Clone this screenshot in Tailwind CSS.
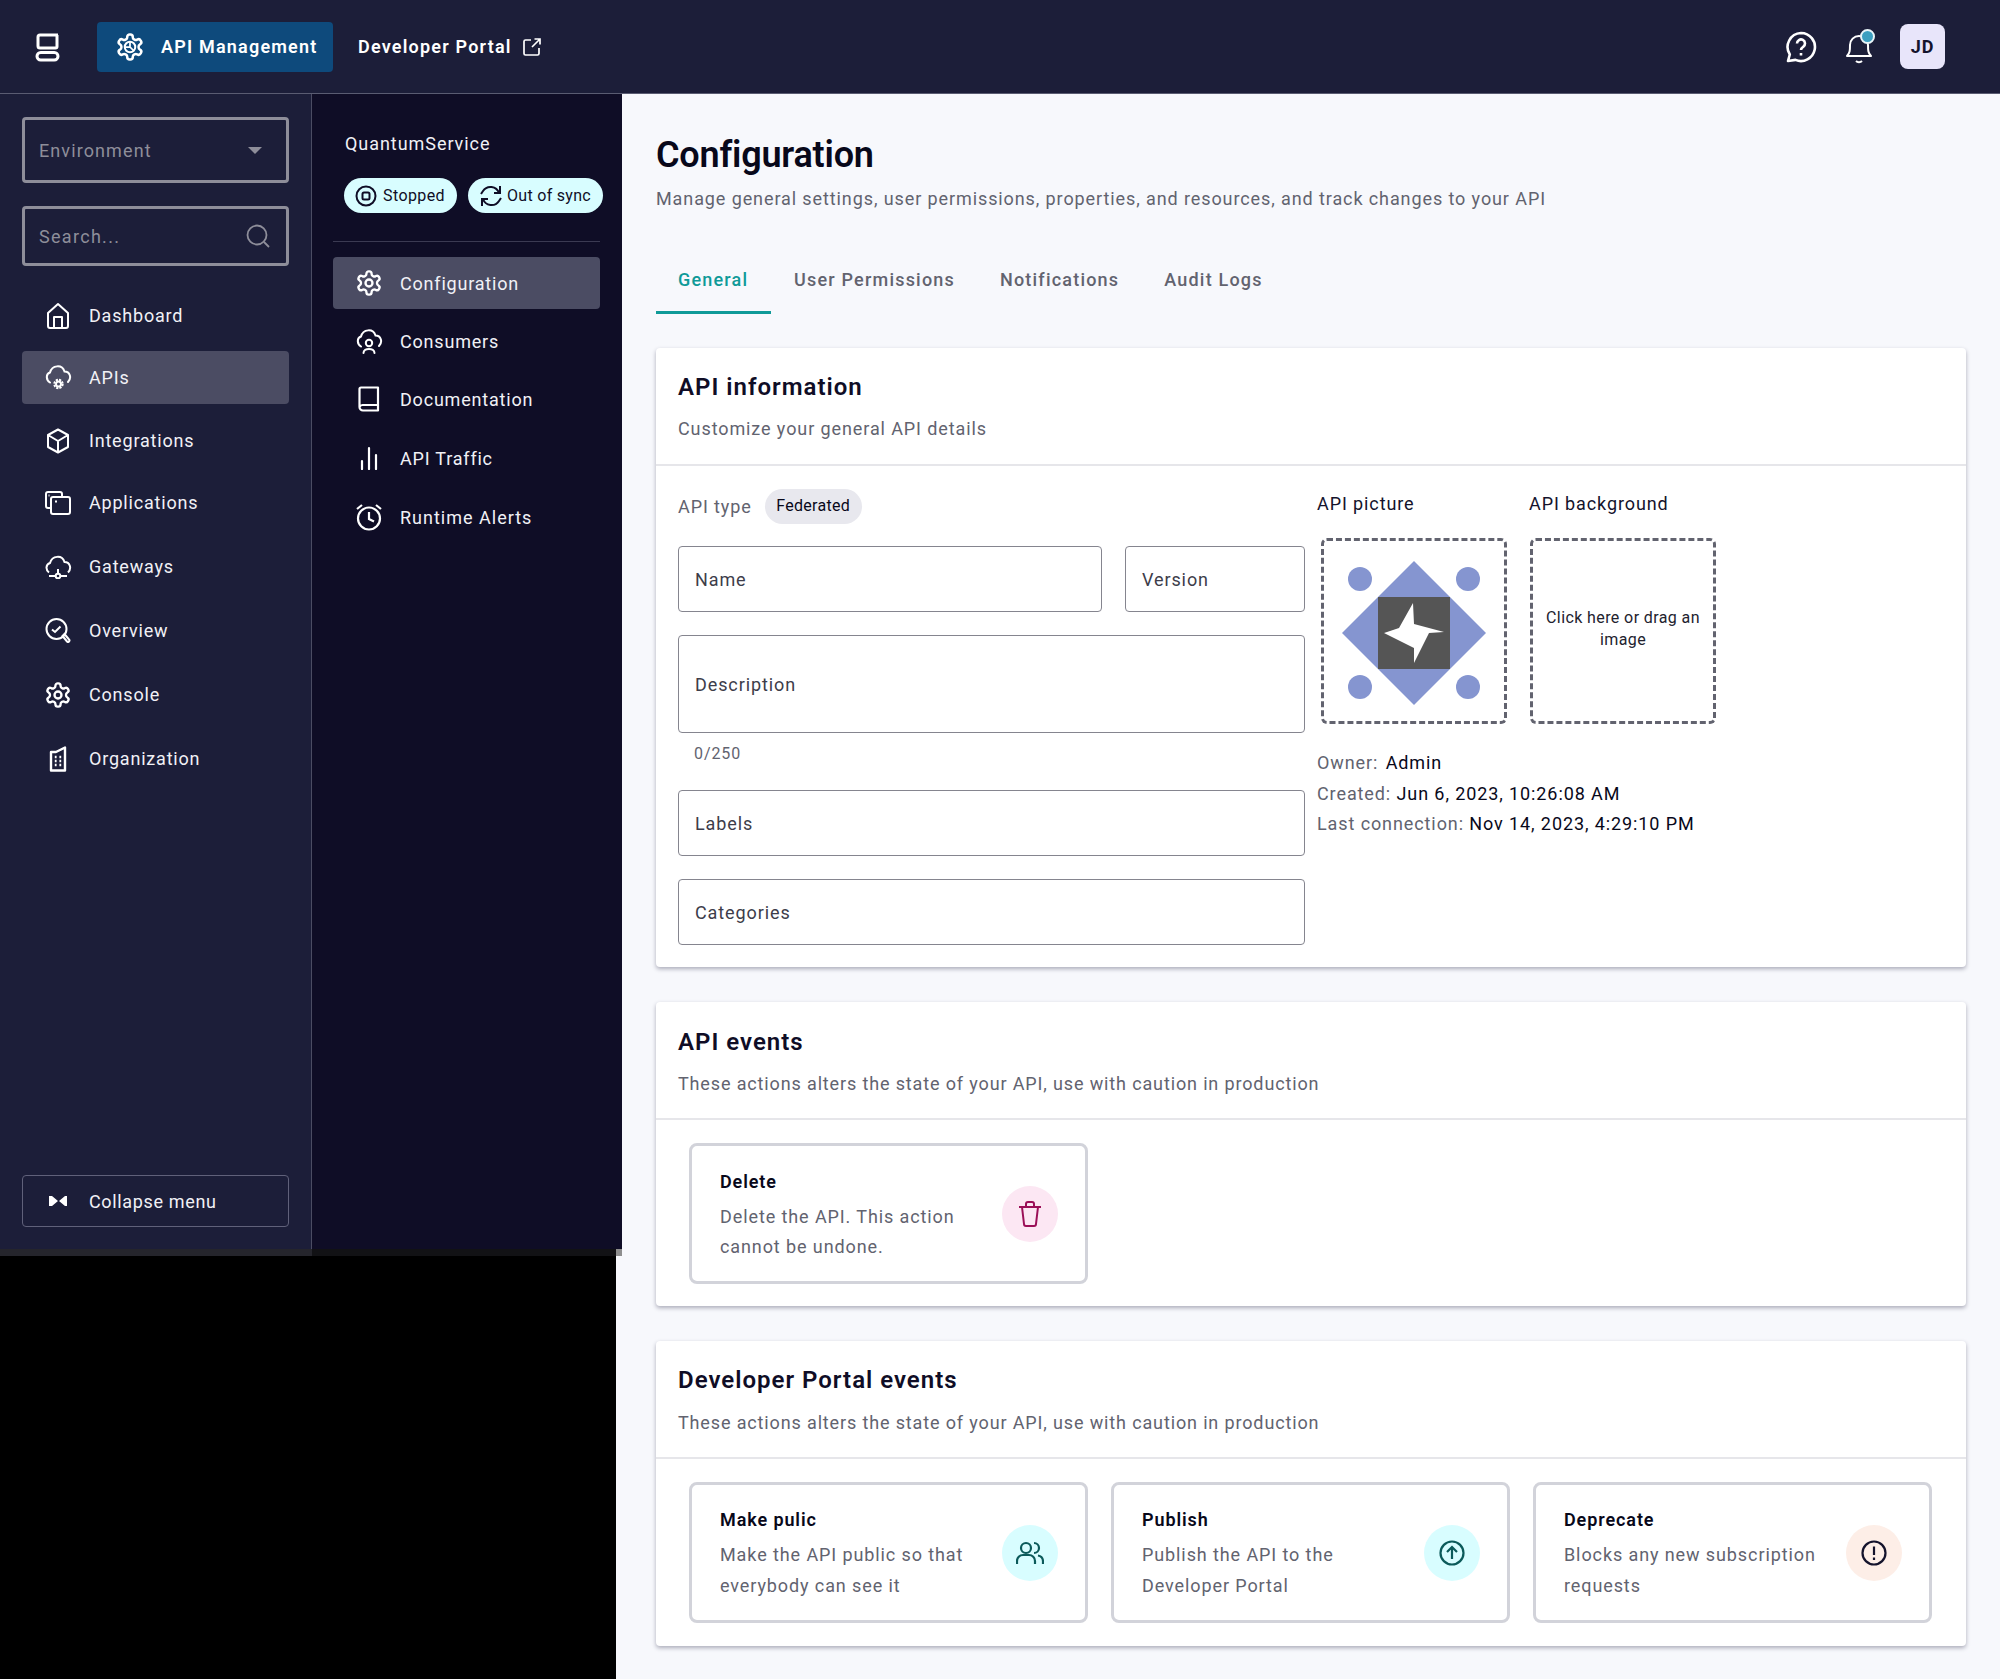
<!doctype html>
<html><head><meta charset="utf-8"><script src="https://cdn.jsdelivr.net/npm/@tailwindcss/browser@4"></script></head>
<body class="m-0 w-[2000px] h-[1679px] overflow-hidden bg-[#f7f8fc] font-['Roboto',sans-serif] text-[18px] tracking-[0.9px]">
<header class="h-[94px] bg-[#1c1e39] border-b border-[#5a5c72] flex items-center text-white">
  <svg class="ml-[35px] w-[25px] h-[30px] mt-[1px]" viewBox="0 0 25 30" fill="none" stroke="#fff" stroke-width="3" stroke-linejoin="round"><path d="M23 3H5a2 2 0 0 0-2 2v9a2 2 0 0 0 2 2h15.500a1.500 1.500 0 0 0 1.500-1.500V3"/><rect x="2" y="20.500" width="21" height="7.500" rx="3.700"/></svg>
  <div class="ml-[37px] w-[236px] h-[50px] rounded-[4px] bg-[#0e4a7c] flex items-center pl-[18px] font-semibold tracking-[1.2px]">
    <svg class="w-[30px] h-[32px]" viewBox="0 0 24 24" fill="none" stroke="#fff" stroke-width="2" stroke-linejoin="round"><path d="M12.220 2h-.44a2 2 0 0 0-2 2v.18a2 2 0 0 1-1 1.730l-.43.25a2 2 0 0 1-2 0l-.15-.08a2 2 0 0 0-2.730.73l-.22.38a2 2 0 0 0 .73 2.730l.15.1a2 2 0 0 1 1 1.720v.51a2 2 0 0 1-1 1.740l-.15.09a2 2 0 0 0-.73 2.730l.22.38a2 2 0 0 0 2.730.73l.15-.08a2 2 0 0 1 2 0l.43.25a2 2 0 0 1 1 1.730V20a2 2 0 0 0 2 2h.44a2 2 0 0 0 2-2v-.18a2 2 0 0 1 1-1.730l.43-.25a2 2 0 0 1 2 0l.15.08a2 2 0 0 0 2.730-.73l.22-.39a2 2 0 0 0-.73-2.730l-.15-.08a2 2 0 0 1-1-1.740v-.5a2 2 0 0 1 1-1.740l.15-.09a2 2 0 0 0 .73-2.730l-.22-.38a2 2 0 0 0-2.730-.73l-.15.08a2 2 0 0 1-2 0l-.43-.25a2 2 0 0 1-1-1.730V4a2 2 0 0 0-2-2z"/><circle cx="12" cy="12" r="4.200" stroke-width="1.600"/><path d="M12 8v4l2.800 2.800M12 12H8" stroke-width="1.400"/></svg>
    <span class="ml-[16px]">API Management</span>
  </div>
  <div class="ml-[25px] flex items-center font-semibold tracking-[1.2px]"><span>Developer Portal</span>
    <svg class="ml-[10px] w-[20px] h-[20px]" viewBox="0 0 20 20" fill="none" stroke="#fff" stroke-width="1.700"><path d="M9 3H3.500A1.500 1.500 0 0 0 2 4.500v12A1.500 1.500 0 0 0 3.500 18h12a1.500 1.500 0 0 0 1.500-1.500V11M10 10l8-8M12.500 2H18v5.500"/></svg>
  </div>
  <div class="ml-auto flex items-center">
    <svg class="w-[32px] h-[32px] -ml-[1px]" viewBox="0 0 32 32" fill="none" stroke="#fff" stroke-width="2.600"><path d="M16 2a14 14 0 1 1-5.500 26.900L3 30l1.800-6.500A14 14 0 0 1 16 2z" stroke-linejoin="round"/><path d="M12 12.500a4 4 0 1 1 6.200 3.300c-1.400 1-2.200 1.600-2.200 3.200M16 22v2.500"/></svg>
    <div class="relative ml-[26px] w-[32px] h-[36px]">
      <svg class="w-[32px] h-[36px]" viewBox="0 0 32 36" fill="none" stroke="#fff" stroke-width="2"><path d="M4 27c3-3 3-6 3-11a9 9 0 0 1 18 0c0 5 0 8 3 11z" stroke-linejoin="round"/><path d="M13 32c1.500 1.500 4.500 1.500 6 0"/></svg>
      <span class="absolute left-[17px] top-0 w-[15px] h-[15px] rounded-full bg-[#3c9fc0] border-2 border-[#e8f4f8]"></span>
    </div>
    <div class="ml-[25px] mr-[55px] w-[45px] h-[45px] rounded-[8px] bg-[#e8e5fa] text-[#14132c] flex items-center justify-center font-bold">JD</div>
  </div>
</header>
<div class="h-[1585px] flex">
  <div class="w-[622px] flex flex-col shrink-0">
    <div class="h-[1155px] flex text-[#f1f1f6] tracking-[0.8px]">
      <aside class="w-[312px] bg-[#1c1e39] border-r border-[#4b4c63] px-[22px] pt-[23px] pb-[22px] flex flex-col">
        <div class="w-[267px] h-[66px] rounded-[4px] border-[3px] border-[#8e8e9a] flex items-center px-[14px] text-[#8e8e9a] tracking-[1.1px]"><span>Environment</span><span class="ml-auto mr-[10px] w-0 h-0 border-x-[7px] border-x-transparent border-t-[7px] border-t-[#8e8e9a]"></span></div>
        <div class="mt-[23px] w-[267px] h-[60px] rounded-[4px] border-[3px] border-[#8e8e9a] flex items-center pl-[14px] pr-[16px] text-[#8e8e9a] tracking-[1.3px]"><span>Search...</span>
          <svg class="ml-auto w-[24px] h-[24px]" viewBox="0 0 24 24" fill="none" stroke="#8e8e9a" stroke-width="1.800"><circle cx="11" cy="11" r="9.500"/><path d="M18 18l5 5"/></svg></div>
        <nav class="mt-[23px] flex flex-col">
          <a class="h-[53px] flex items-center pl-[24px] gap-[19px]"><svg class="w-[24px] h-[28px] shrink-0" viewBox="0 0 24 28" fill="none" stroke="#fff" stroke-width="2" stroke-linejoin="round"><path d="M2 24V11L12 2l10 9v13a2 2 0 0 1-2 2H4a2 2 0 0 1-2-2z"/><path d="M8 26V15h8v11"/></svg>Dashboard</a>
          <a class="h-[53px] mt-[9px] rounded-[4px] bg-[#4b4c63] flex items-center pl-[22px] gap-[17px]"><svg class="w-[28px] h-[28px] shrink-0" viewBox="0 0 28 28" fill="none" stroke="#fff" stroke-width="2" stroke-linecap="round"><path d="M6 18.500C2 16 1.500 10 6 8.500 8 1 18 0 20.500 7.500 26 7.500 28 14 24 18"/><circle cx="14.500" cy="20" r="2.500" stroke-width="2"/><circle cx="14.500" cy="20" r="4.200" stroke-width="2" stroke-dasharray="2.200 1.100" stroke-linecap="butt"/></svg>APIs</a>
          <a class="h-[53px] mt-[10px] flex items-center pl-[24px] gap-[19px]"><svg class="w-[24px] h-[26px] shrink-0" viewBox="0 0 24 26" fill="none" stroke="#fff" stroke-width="2" stroke-linejoin="round"><path d="M12 1.500l10 5.500v12l-10 5.500L2 19V7zM2 7l10 6 10-6M12 13v11.500"/></svg>Integrations</a>
          <a class="h-[53px] mt-[9px] flex items-center pl-[23px] gap-[18px]"><svg class="w-[26px] h-[24px] shrink-0" viewBox="0 0 26 24" fill="none" stroke="#fff" stroke-width="2" stroke-linejoin="round"><path d="M6 17H3a2 2 0 0 1-2-2V3a2 2 0 0 1 2-2h12a2 2 0 0 1 2 2v3"/><rect x="6" y="6" width="19" height="17" rx="2"/><path d="M10 10.500h2M3.500 4.500h1" stroke-width="2.200"/></svg>Applications</a>
          <a class="h-[53px] mt-[11px] flex items-center pl-[22px] gap-[17px]"><svg class="w-[28px] h-[24px] shrink-0" viewBox="0 0 28 24" fill="none" stroke="#fff" stroke-width="2"><path d="M5 17.500C1.500 15 1.500 9.500 6 8 8 .5 18-.5 20.500 7 26 7 28 13.500 24 17.500M14 14v4M5 21h6.500M16.500 21H23"/><circle cx="14" cy="21" r="2.300"/></svg>Gateways</a>
          <a class="h-[53px] mt-[11px] flex items-center pl-[23px] gap-[18px]"><svg class="w-[26px] h-[25px] shrink-0" viewBox="0 0 26 25" fill="none" stroke="#fff" stroke-width="2"><circle cx="11.500" cy="11" r="10"/><path d="M7 11.500l3 2.500 5.500-5.500M17.500 18l2-2 4.500 5.500a1.400 1.400 0 0 1-2 2z"/></svg>Overview</a>
          <a class="h-[53px] mt-[11px] flex items-center pl-[22px] gap-[17px]"><svg class="w-[28px] h-[28px] shrink-0" viewBox="0 0 24 24" fill="none" stroke="#fff" stroke-width="2" stroke-linejoin="round"><path d="M12.220 2h-.44a2 2 0 0 0-2 2v.18a2 2 0 0 1-1 1.730l-.43.25a2 2 0 0 1-2 0l-.15-.08a2 2 0 0 0-2.730.73l-.22.38a2 2 0 0 0 .73 2.730l.15.1a2 2 0 0 1 1 1.720v.51a2 2 0 0 1-1 1.740l-.15.09a2 2 0 0 0-.73 2.730l.22.38a2 2 0 0 0 2.730.73l.15-.08a2 2 0 0 1 2 0l.43.25a2 2 0 0 1 1 1.730V20a2 2 0 0 0 2 2h.44a2 2 0 0 0 2-2v-.18a2 2 0 0 1 1-1.730l.43-.25a2 2 0 0 1 2 0l.15.08a2 2 0 0 0 2.730-.73l.22-.39a2 2 0 0 0-.73-2.730l-.15-.08a2 2 0 0 1-1-1.740v-.5a2 2 0 0 1 1-1.740l.15-.09a2 2 0 0 0 .73-2.730l-.22-.38a2 2 0 0 0-2.730-.73l-.15.08a2 2 0 0 1-2 0l-.43-.25a2 2 0 0 1-1-1.730V4a2 2 0 0 0-2-2z"/><circle cx="12" cy="12" r="3"/></svg>Console</a>
          <a class="h-[53px] mt-[11px] flex items-center pl-[24px] gap-[19px]"><svg class="w-[24px] h-[26px] shrink-0" viewBox="0 0 24 26" fill="none" stroke="#fff" stroke-width="2.400" stroke-linejoin="round"><path d="M5 6h5l9-4.500V24.500H5z"/><path d="M8.800 11h1.800M13.400 11h1.800M8.800 15h1.800M13.400 15h1.800M8.800 19h1.800M13.400 19h1.800" stroke-width="2.400"/></svg>Organization</a>
        </nav>
        <div class="mt-auto w-[267px] h-[52px] rounded-[4px] border border-[#60617a] flex items-center pl-[23px] gap-[19px] tracking-[0.65px]">
          <svg class="w-[24px] h-[14px] shrink-0" viewBox="0 0 24 14" fill="#fff"><path d="M3 2h3l6 5-6 5H3zM21 2v10h-2l-6-5 6-5z"/></svg>Collapse menu</div>
      </aside>
      <aside class="w-[310px] bg-[#0f0d26] pt-[32px] pl-[21px] pr-[22px]">
        <div class="ml-[12px] leading-[36px] h-[36px] tracking-[0.95px]">QuantumService</div>
        <div class="ml-[11px] mt-[16px] flex gap-[11px] text-[#0f0d26] text-[16px] tracking-[0.4px]">
          <span class="h-[35px] w-[113px] shrink-0 rounded-full bg-[#d8fdff] flex items-center pl-[11px] gap-[6px]"><svg class="w-[22px] h-[22px]" viewBox="0 0 22 22" fill="none" stroke="#0f0d26" stroke-width="2"><circle cx="11" cy="11" r="9.500"/><rect x="7.500" y="7.500" width="7" height="7" rx="1.500"/></svg>Stopped</span>
          <span class="h-[35px] w-[135px] shrink-0 rounded-full bg-[#d8fdff] flex items-center pl-[11px] gap-[4px] tracking-[0.3px]"><svg class="w-[24px] h-[24px]" viewBox="0 0 24 24" fill="none" stroke="#0f0d26" stroke-width="2"><path d="M20 9a9 9 0 0 0-16-2L2 10M4 15a9 9 0 0 0 16 2l2-3"/><path d="M21 2v7h-6M3 22v-7h6"/></svg>Out of sync</span>
        </div>
        <div class="mt-[28px] h-[1px] bg-[#3b3a52]"></div>
        <div class="mt-[15px] flex flex-col">
          <a class="h-[52px] rounded-[4px] bg-[#4b4c63] flex items-center pl-[22px] gap-[17px]"><svg class="w-[28px] h-[28px] shrink-0" viewBox="0 0 24 24" fill="none" stroke="#fff" stroke-width="2" stroke-linejoin="round"><path d="M12.220 2h-.44a2 2 0 0 0-2 2v.18a2 2 0 0 1-1 1.730l-.43.25a2 2 0 0 1-2 0l-.15-.08a2 2 0 0 0-2.730.73l-.22.38a2 2 0 0 0 .73 2.730l.15.1a2 2 0 0 1 1 1.720v.51a2 2 0 0 1-1 1.740l-.15.09a2 2 0 0 0-.73 2.730l.22.38a2 2 0 0 0 2.730.73l.15-.08a2 2 0 0 1 2 0l.43.25a2 2 0 0 1 1 1.730V20a2 2 0 0 0 2 2h.44a2 2 0 0 0 2-2v-.18a2 2 0 0 1 1-1.730l.43-.25a2 2 0 0 1 2 0l.15.08a2 2 0 0 0 2.730-.73l.22-.39a2 2 0 0 0-.73-2.730l-.15-.08a2 2 0 0 1-1-1.740v-.5a2 2 0 0 1 1-1.740l.15-.09a2 2 0 0 0 .73-2.730l-.22-.38a2 2 0 0 0-2.730-.73l-.15.08a2 2 0 0 1-2 0l-.43-.25a2 2 0 0 1-1-1.730V4a2 2 0 0 0-2-2z"/><circle cx="12" cy="12" r="3"/></svg>Configuration</a>
          <a class="h-[52px] mt-[6px] flex items-center pl-[22px] gap-[17px]"><svg class="w-[28px] h-[26px] shrink-0" viewBox="0 0 28 26" fill="none" stroke="#fff" stroke-width="2" stroke-linecap="round"><path d="M6 18.500C2 16 1.500 10 6 8.500 8 1 18 0 20.500 7.500 26 7.500 28 14 24 18"/><circle cx="14" cy="15" r="3.200"/><path d="M8.500 25c0-5.500 11-5.500 11 0"/></svg>Consumers</a>
          <a class="h-[52px] mt-[6px] flex items-center pl-[22px] gap-[17px]"><svg class="w-[28px] h-[26px] shrink-0" viewBox="0 0 28 26" fill="none" stroke="#fff" stroke-width="2.200" stroke-linejoin="round"><path d="M4.500 21V3a1.500 1.500 0 0 1 1.500-1.500h17V24.500H8A3.500 3.500 0 0 1 4.500 21zM4.500 21A3.500 3.500 0 0 1 8 19h15"/></svg>Documentation</a>
          <a class="h-[52px] mt-[7px] flex items-center pl-[22px] gap-[17px]"><svg class="w-[28px] h-[24px] shrink-0" viewBox="0 0 28 24" fill="none" stroke="#fff" stroke-width="2.200" stroke-linecap="round"><path d="M7 23v-8M14 23V2M21 23V9"/></svg>API Traffic</a>
          <a class="h-[52px] mt-[7px] flex items-center pl-[22px] gap-[17px] tracking-[1px]"><svg class="w-[28px] h-[28px] shrink-0" viewBox="0 0 28 28" fill="none" stroke="#fff" stroke-width="2.200"><circle cx="14" cy="15.500" r="11"/><path d="M14 9v7l5 2.500M2 6l5-4M26 6l-5-4"/></svg>Runtime Alerts</a>
        </div>
      </aside>
    </div>
    <div class="h-[7px] flex"><div class="w-[312px] bg-[#25252c]"></div><div class="w-[304px] bg-[#121215]"></div><div class="w-[6px] bg-[#8e8e8e]"></div></div>
    <div class="flex-1 w-[616px] bg-black"></div>
  </div>
  <main class="flex-1 pl-[34px] pr-[34px] text-[#62636f]">
    <h1 class="pt-[41px] h-[77px] text-[36px] leading-[40px] font-semibold text-[#08081a] tracking-[-0.2px]">Configuration</h1>
    <p class="mt-[14px] leading-[28px]">Manage general settings, user permissions, properties, and resources, and track changes to your API</p>
    <div class="mt-[30px] flex font-medium h-[71px] tracking-[1.2px]">
      <span class="relative w-[115px] pl-[22px] text-[#0f9a98] leading-[74px]">General<i class="absolute left-0 bottom-0 w-[115px] h-[3px] bg-[#0f9a98]"></i></span>
      <span class="ml-[23px] leading-[74px]">User Permissions</span>
      <span class="ml-[45px] leading-[74px]">Notifications</span>
      <span class="ml-[45px] leading-[74px]">Audit Logs</span>
    </div>
    <section class="mt-[34px] h-[619px] bg-white rounded-[4px] shadow-[0_2px_4px_rgba(30,30,60,0.35)]">
      <div class="h-[118px] border-b-2 border-[#e6e6ea] pl-[22px] pt-[21px]">
        <h2 class="text-[24px] leading-[36px] font-semibold text-[#0f0d26] tracking-[1px]">API information</h2>
        <p class="mt-[11px] leading-[26px]">Customize your general API details</p>
      </div>
      <div class="flex pl-[22px]">
        <div class="w-[627px]">
          <div class="h-[80px] flex items-center">API type<span class="ml-[13px] h-[35px] w-[97px] rounded-full bg-[#e8e8ee] text-[#08081a] text-[16px] flex items-center justify-center tracking-[0.3px]">Federated</span></div>
          <div class="flex gap-[23px]">
            <div class="w-[424px] h-[66px] rounded-[4px] border border-[#85858f] flex items-center pl-[16px] text-[#3d3d4a]">Name</div>
            <div class="w-[180px] h-[66px] rounded-[4px] border border-[#85858f] flex items-center pl-[16px] text-[#3d3d4a]">Version</div>
          </div>
          <div class="mt-[23px] h-[98px] rounded-[4px] border border-[#85858f] flex items-center pl-[16px] text-[#3d3d4a]">Description</div>
          <div class="pl-[16px] h-[57px] pt-[8px] text-[16px] leading-[26px]">0/250</div>
          <div class="h-[66px] rounded-[4px] border border-[#85858f] flex items-center pl-[16px] text-[#3d3d4a]">Labels</div>
          <div class="mt-[23px] h-[66px] rounded-[4px] border border-[#85858f] flex items-center pl-[16px] text-[#3d3d4a]">Categories</div>
        </div>
        <div class="ml-[12px]">
          <div class="flex text-[#14132c] pt-[24px] leading-[28px] h-[72px]"><span class="w-[212px]">API picture</span><span>API background</span></div>
          <div class="flex ml-[4px] gap-[23px]">
            <div class="w-[186px] h-[186px] rounded-[6px] border-[3px] border-dashed border-[#62636f] flex items-center justify-center pt-[4px]">
              <svg class="w-[144px] h-[144px]" viewBox="0 0 144 144"><circle cx="18" cy="18" r="12" fill="#8595d0"/><circle cx="126" cy="18" r="12" fill="#8595d0"/><circle cx="18" cy="126" r="12" fill="#8595d0"/><circle cx="126" cy="126" r="12" fill="#8595d0"/><path d="M72 0l72 72-72 72L0 72z" fill="#8595d0"/><rect x="36" y="36" width="72" height="72" fill="#555"/><path d="M71 42l1 21 30 8-15 1-15 30 0-15-30-15 15-5z" fill="#fff"/></svg>
            </div>
            <div class="w-[186px] h-[186px] rounded-[6px] border-[3px] border-dashed border-[#62636f] flex items-center justify-center text-center text-[16px] leading-[22px] tracking-[0.4px] text-[#22222e] px-[10px] pb-[4px]">Click here or drag an image</div>
          </div>
          <div class="mt-[24px] leading-[30.500px]">
            <div>Owner: <span class="text-[#08081a] ml-[2px]">Admin</span></div>
            <div>Created: <span class="text-[#08081a]">Jun 6, 2023, 10:26:08 AM</span></div>
            <div>Last connection: <span class="text-[#08081a]">Nov 14, 2023, 4:29:10 PM</span></div>
          </div>
        </div>
      </div>
    </section>
    <section class="mt-[35px] h-[304px] bg-white rounded-[4px] shadow-[0_2px_4px_rgba(30,30,60,0.35)]">
      <div class="h-[118px] border-b-2 border-[#e6e6ea] pl-[22px] pt-[22px]">
        <h2 class="text-[24px] leading-[36px] font-semibold text-[#0f0d26] tracking-[1px]">API events</h2>
        <p class="mt-[11px] leading-[26px] tracking-[0.86px]">These actions alters the state of your API, use with caution in production</p>
      </div>
      <div class="pl-[33px] pt-[23px]">
        <div class="w-[399px] h-[141px] rounded-[8px] border-[3px] border-[#d2d3da] flex items-center pl-[28px] pr-[27px]">
          <div class="w-[260px]"><div class="font-semibold text-[#08081a] leading-[34px]">Delete</div><div class="leading-[30.500px] mt-[3px]">Delete the API. This action cannot be undone.</div></div>
          <span class="ml-auto w-[56px] h-[56px] rounded-full bg-[#fce7f3] flex items-center justify-center"><svg class="w-[24px] h-[26px]" viewBox="0 0 24 26" fill="none" stroke="#9b0f57" stroke-width="2"><path d="M1 6h22M4 6l2 17a2 2 0 0 0 2 2h8a2 2 0 0 0 2-2l2-17M8 6V3a2 2 0 0 1 2-2h4a2 2 0 0 1 2 2v3"/></svg></span>
        </div>
      </div>
    </section>
    <section class="mt-[35px] h-[305px] bg-white rounded-[4px] shadow-[0_2px_4px_rgba(30,30,60,0.35)]">
      <div class="h-[118px] border-b-2 border-[#e6e6ea] pl-[22px] pt-[21px]">
        <h2 class="text-[24px] leading-[36px] font-semibold text-[#0f0d26] tracking-[1px]">Developer Portal events</h2>
        <p class="mt-[12px] leading-[26px] tracking-[0.86px]">These actions alters the state of your API, use with caution in production</p>
      </div>
      <div class="pl-[33px] pt-[23px] flex gap-[23px]">
        <div class="w-[399px] h-[141px] rounded-[8px] border-[3px] border-[#d2d3da] flex items-center pl-[28px] pr-[27px]">
          <div class="w-[260px]"><div class="font-semibold text-[#08081a] leading-[34px] -mt-[1px]">Make pulic</div><div class="leading-[30.500px] mt-[3px]">Make the API public so that everybody can see it</div></div>
          <span class="ml-auto w-[56px] h-[56px] rounded-full bg-[#d8fdff] flex items-center justify-center"><svg class="w-[28px] h-[24px]" viewBox="0 0 28 24" fill="none" stroke="#0b5a5a" stroke-width="2.200"><circle cx="10" cy="7" r="5"/><path d="M1 23v-3a6 6 0 0 1 6-6h6a6 6 0 0 1 6 6v3M18 2a5 5 0 0 1 0 10M22 14.500a6 6 0 0 1 5 5.500v3"/></svg></span>
        </div>
        <div class="w-[399px] h-[141px] rounded-[8px] border-[3px] border-[#d2d3da] flex items-center pl-[28px] pr-[27px]">
          <div class="w-[260px]"><div class="font-semibold text-[#08081a] leading-[34px] -mt-[1px]">Publish</div><div class="leading-[30.500px] mt-[3px]">Publish the API to the Developer Portal</div></div>
          <span class="ml-auto w-[56px] h-[56px] rounded-full bg-[#d8fdff] flex items-center justify-center"><svg class="w-[26px] h-[26px]" viewBox="0 0 26 26" fill="none" stroke="#0b5a5a" stroke-width="2.200"><circle cx="13" cy="13" r="11.500"/><path d="M13 19V8M8 12l5-5 5 5"/></svg></span>
        </div>
        <div class="w-[399px] h-[141px] rounded-[8px] border-[3px] border-[#d2d3da] flex items-center pl-[28px] pr-[27px]">
          <div class="w-[270px]"><div class="font-semibold text-[#08081a] leading-[34px] -mt-[1px]">Deprecate</div><div class="leading-[30.500px] mt-[3px]">Blocks any new subscription requests</div></div>
          <span class="ml-auto w-[56px] h-[56px] rounded-full bg-[#fdeee7] flex items-center justify-center"><svg class="w-[26px] h-[26px]" viewBox="0 0 26 26" fill="none" stroke="#14132c" stroke-width="2.200"><circle cx="13" cy="13" r="11.500"/><path d="M13 6.500V15M13 17.500v2.500"/></svg></span>
        </div>
      </div>
    </section>
  </main>
</div>
</body></html>
